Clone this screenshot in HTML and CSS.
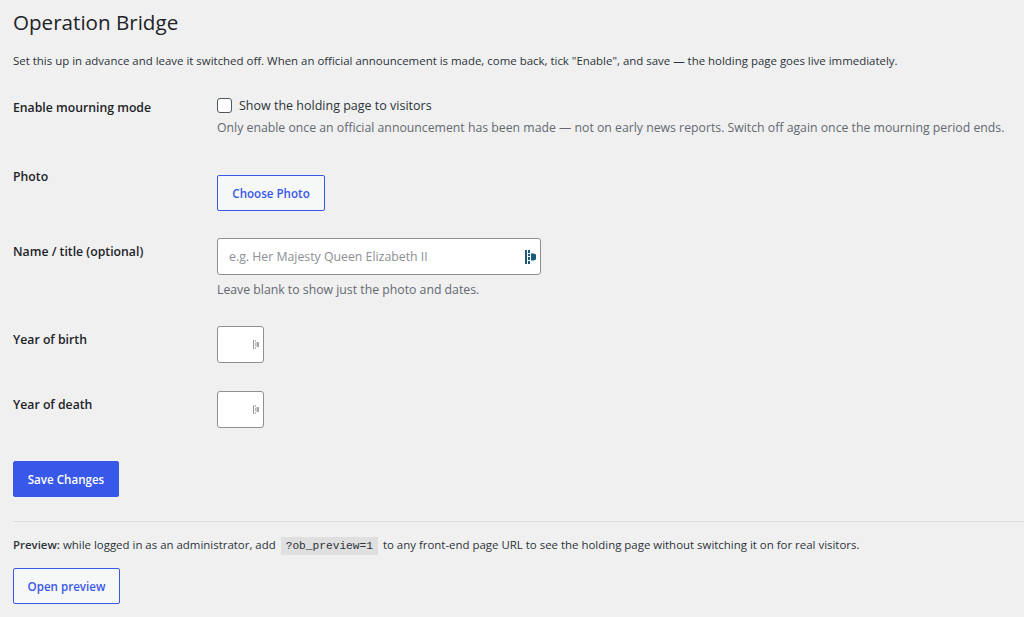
FILE: index.html
```html
<!DOCTYPE html>
<html lang="en">
<head>
<meta charset="utf-8">
<title>Operation Bridge</title>
<link rel="stylesheet" href="styles.css">
</head>
<body>
<div class="wrap">
  <h1 class="page-title">Operation Bridge</h1>
  <p class="intro">Set this up in advance and leave it switched off. When an official announcement is made, come back, tick "Enable", and save — the holding page goes live immediately.</p>

  <form class="settings">
    <div class="row row-enable">
      <div class="label">Enable mourning mode</div>
      <div class="field">
        <label class="check-line"><span class="checkbox"></span><span>Show the holding page to visitors</span></label>
        <p class="description d-enable">Only enable once an official announcement has been made — not on early news reports. Switch off again once the mourning period ends.</p>
      </div>
    </div>

    <div class="row row-photo">
      <div class="label">Photo</div>
      <div class="field">
        <button type="button" class="btn btn-secondary btn-photo">Choose Photo</button>
      </div>
    </div>

    <div class="row row-name">
      <div class="label">Name / title (optional)</div>
      <div class="field">
        <div class="input input-name">
          <span class="placeholder">e.g. Her Majesty Queen Elizabeth II</span>
          <svg class="pm-icon" width="11" height="14" viewBox="0 0 11 14">
            <rect x="0" y="0" width="2" height="14" fill="#1b5a78"/>
            <rect x="3" y="0" width="2" height="3" fill="#1b5a78"/>
            <rect x="3" y="4" width="2" height="2" fill="#1b5a78"/>
            <rect x="3" y="7" width="2" height="3" fill="#1b5a78"/>
            <rect x="3" y="11" width="2" height="3" fill="#1b5a78"/>
            <path d="M6 3.5 H8 A3 3 0 0 1 8 10.5 H6 Z" fill="#1b5a78"/>
          </svg>
        </div>
        <p class="description d-name">Leave blank to show just the photo and dates.</p>
      </div>
    </div>

    <div class="row row-year">
      <div class="label">Year of birth</div>
      <div class="field">
        <div class="input input-year">
          <svg class="pm-icon small" width="6" height="9" viewBox="0 0 6 9">
            <rect x="0" y="0" width="1" height="9" fill="#9a9a9a"/>
            <rect x="2" y="0" width="1" height="2" fill="#b5b5b5"/>
            <rect x="2" y="3" width="1" height="3" fill="#b5b5b5"/>
            <rect x="2" y="7" width="1" height="2" fill="#b5b5b5"/>
            <path d="M3.5 2 H4.5 A2 2 0 0 1 4.5 7 H3.5 Z" fill="#a5a5a5"/>
          </svg>
        </div>
      </div>
    </div>

    <div class="row row-year">
      <div class="label">Year of death</div>
      <div class="field">
        <div class="input input-year">
          <svg class="pm-icon small" width="6" height="9" viewBox="0 0 6 9">
            <rect x="0" y="0" width="1" height="9" fill="#9a9a9a"/>
            <rect x="2" y="0" width="1" height="2" fill="#b5b5b5"/>
            <rect x="2" y="3" width="1" height="3" fill="#b5b5b5"/>
            <rect x="2" y="7" width="1" height="2" fill="#b5b5b5"/>
            <path d="M3.5 2 H4.5 A2 2 0 0 1 4.5 7 H3.5 Z" fill="#a5a5a5"/>
          </svg>
        </div>
      </div>
    </div>

    <div class="submit">
      <button type="button" class="btn btn-primary btn-save">Save Changes</button>
    </div>
  </form>

  <hr class="divider">

  <p class="preview-note"><strong>Preview:</strong> while logged in as an administrator, add <code>?ob_preview=1</code> to any front-end page URL to see the holding page without switching it on for real visitors.</p>
  <button type="button" class="btn btn-secondary btn-preview">Open preview</button>
</div>
</body>
</html>
```

FILE: styles.css
```css
html, body {
  margin: 0;
  padding: 0;
  background: #f0f0f1;
}

body {
  font-family: "Segoe UI", "Open Sans", "Noto Sans", sans-serif;
  font-size: 11.5px;
  color: #1d2327;
}

.wrap {
  padding: 0 13px;
}

.page-title {
  font-size: 20.6px;
  font-weight: 400;
  line-height: 30px;
  margin: 0;
  padding-top: 7px;
  color: #1d2327;
}

.intro {
  margin: 14px 0 0;
  line-height: 20px;
  font-size: 11.45px;
  color: #2c3338;
}

.settings {
  margin-top: 8px;
}

.row {
  display: grid;
  grid-template-columns: 204px 1fr;
}

.label {
  font-weight: 600;
  font-size: 12.25px;
  line-height: 18px;
  padding-top: 20px;
  color: #1d2327;
}

.field {
  padding-top: 15px;
}

.row-enable { height: 69px; }
.row-photo { height: 75px; }
.row-name { height: 88px; }
.row-year { height: 65px; }

.check-line {
  display: flex;
  align-items: center;
  gap: 7px;
  height: 22px;
  font-size: 12.5px;
  color: #2c3338;
}

.checkbox {
  width: 13px;
  height: 13px;
  border: 1px solid #50575e;
  border-radius: 3px;
  background: #fff;
}

.description {
  margin: 0;
  line-height: 20px;
  font-size: 12.28px;
  color: #646970;
  white-space: nowrap;
}

.d-enable { margin-top: 2px; }
.d-name { margin-top: 5px; }

.btn {
  display: inline-flex;
  align-items: center;
  justify-content: center;
  height: 36px;
  padding: 0;
  border-radius: 2px;
  font-family: inherit;
  font-size: 11.6px;
  font-weight: 600;
  white-space: nowrap;
  cursor: pointer;
  box-sizing: border-box;
}

.btn-secondary {
  background: #f6f7f7;
  border: 1px solid #3858e9;
  color: #3858e9;
}

.btn-primary {
  background: #3858e9;
  border: 1px solid #3858e9;
  color: #fff;
}

.btn-photo {
  margin-top: 12px;
  width: 108px;
}

.btn-save {
  width: 106px;
}

.btn-preview {
  margin-top: 12px;
  width: 107px;
}

.input {
  display: flex;
  align-items: center;
  background: #fff;
  border: 1px solid #8c8f94;
  border-radius: 3px;
  box-sizing: border-box;
  height: 37px;
}

.input-name {
  width: 324px;
  padding: 0 4px 0 11px;
}

.placeholder {
  flex: 1;
  font-size: 12.3px;
  color: #8c8f94;
}

.input-year {
  width: 47px;
  justify-content: flex-end;
  padding-right: 4px;
}

.pm-icon {
  display: block;
}

.submit {
  margin-top: 20px;
}

.divider {
  margin: 24px -13px 0 0;
  border: 0;
  border-top: 1px solid #dcdcde;
  height: 0;
}

.preview-note {
  margin: 13px 0 0;
  line-height: 20px;
  font-size: 11.45px;
  color: #2c3338;
}

.preview-note strong {
  font-weight: 600;
}

.preview-note code {
  font-family: "Liberation Mono", "DejaVu Sans Mono", monospace;
  font-size: 11.2px;
  background: rgba(0, 0, 0, 0.07);
  padding: 3px 5px;
  margin: 0 2px;
}
```
